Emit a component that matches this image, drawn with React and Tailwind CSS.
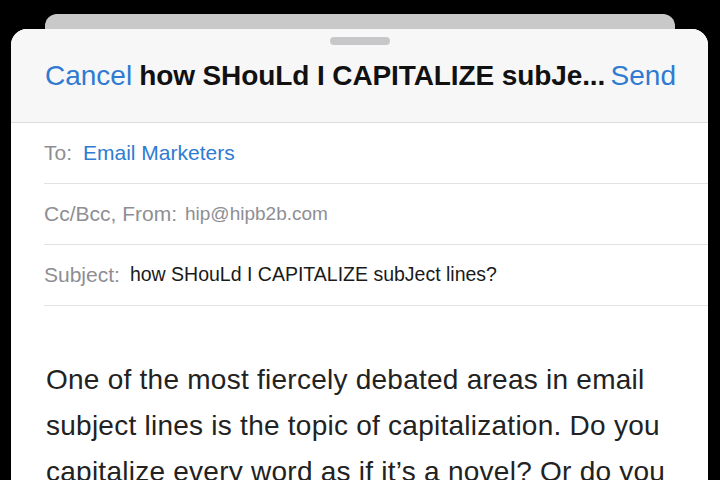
import React from 'react';

const font = { fontFamily: '"Liberation Sans", Arial, sans-serif' };

const Row = ({ children }) => (
  <div className="ml-[33px] h-[61px] flex items-center border-b border-[#e2e2e4]">
    {children}
  </div>
);

const App = () => {
  return (
    <div className="w-[720px] h-[480px] bg-black overflow-hidden" style={font}>
      {/* card behind */}
      <div className="ml-[45px] mr-[45px] mt-[14px] h-[30px] rounded-t-[12px] bg-[#c9c9c9]" />

      {/* compose sheet */}
      <div className="relative -mt-[15px] ml-[11px] mr-[12px] h-[480px] rounded-t-[16px] bg-white overflow-hidden">
        <div className="h-[94px] bg-[#f7f7f7] border-b border-[#dcdcde] flex flex-col items-center">
          <div className="mt-[8px] w-[60px] h-[8px] rounded-full bg-[#c7c7c9]" />
          <div className="mt-[14px] w-full flex items-center pl-[34px] pr-[32px] text-[28px] leading-[34px]">
            <span className="text-[#2f7bd1]">Cancel</span>
            <span className="ml-[7px] font-bold text-[#111] whitespace-nowrap tracking-[-0.1px]">how SHouLd I CAPITALIZE subJe...</span>
            <span className="ml-auto text-[#2f7bd1]">Send</span>
          </div>
        </div>

        <Row>
          <span className="text-[21px] text-[#8e8e93]">To:</span>
          <span className="ml-[11px] text-[21px] text-[#2f7bd1]">Email Marketers</span>
        </Row>
        <Row>
          <span className="text-[21px] text-[#8e8e93]">Cc/Bcc, From:</span>
          <span className="ml-[8px] text-[19px] text-[#8e8e93]">hip@hipb2b.com</span>
        </Row>
        <Row>
          <span className="text-[21px] text-[#8e8e93]">Subject:</span>
          <span className="ml-[10px] text-[19.5px] text-[#1a1a1a]">how SHouLd I CAPITALIZE subJect lines?</span>
        </Row>

        <div className="pt-[51px] pl-[35px] pr-[18px] text-[28px] leading-[46px] text-[#222] tracking-[0.25px]">
          One of the most fiercely debated areas in email subject lines is the topic of capitalization. Do you capitalize every word as if it’s a novel? Or do you
        </div>
      </div>
    </div>
  );
};

export default App;
